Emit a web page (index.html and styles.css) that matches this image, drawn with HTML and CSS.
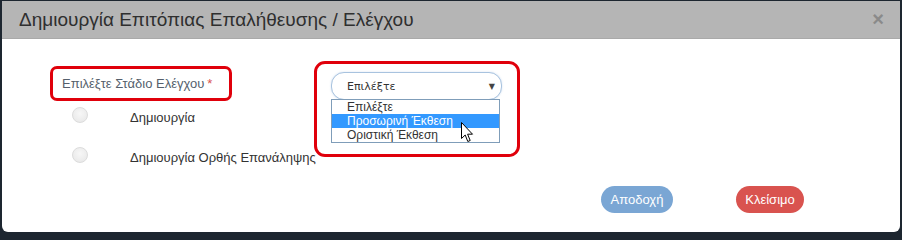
FILE: index.html
```html
<!DOCTYPE html>
<html lang="el">
<head>
<meta charset="utf-8">
<link rel="stylesheet" href="styles.css">
</head>
<body>
<div class="modal">
  <div class="modal-header">
    <h4 class="modal-title">Δημιουργία Επιτόπιας Επαλήθευσης / Ελέγχου</h4>
    <span class="close">×</span>
  </div>
  <div class="modal-body">
    <div class="left-col">
      <div class="label-box">Επιλέξτε Στάδιο Ελέγχου <span class="req">*</span></div>
      <div class="radio-list">
        <div class="radio-row"><span class="radio"></span><span class="radio-label">Δημιουργία</span></div>
        <div class="radio-row"><span class="radio"></span><span class="radio-label">Δημιουργία Ορθής Επανάληψης</span></div>
      </div>
    </div>
    <div class="select-box">
      <div class="select-wrap">
        <div class="select">
          <span>Επιλέξτε</span>
          <span class="arrow">▼</span>
        </div>
        <ul class="options">
          <li>Επιλέξτε</li>
          <li class="active">Προσωρινή Έκθεση</li>
          <li>Οριστική Έκθεση</li>
        </ul>
        <svg class="cursor" width="13" height="21" viewBox="0 0 13 21">
          <path d="M0.5 0.5 L0.5 16.5 L4.2 13 L6.8 19.5 L9.2 18.5 L6.6 12.2 L11.5 12.2 Z" fill="#fff" stroke="#000" stroke-width="1" stroke-linejoin="miter"/>
        </svg>
      </div>
    </div>
  </div>
  <div class="modal-footer">
    <button class="btn btn-accept">Αποδοχή</button>
    <button class="btn btn-close">Κλείσιμο</button>
  </div>
</div>
</body>
</html>
```

FILE: styles.css
```css
html, body {
  margin: 0;
  padding: 0;
}
body {
  background: #1d2630;
  width: 902px;
  height: 235px;
  overflow: hidden;
  font-family: "Liberation Sans", Arial, sans-serif;
}
.modal {
  margin: 1px 2px 0 2px;
  height: 231px;
  background: #fff;
  border-radius: 0 0 6px 6px;
  overflow: hidden;
}
.modal-header {
  height: 37px;
  background: #b5b5b5;
  display: flex;
  align-items: center;
  justify-content: space-between;
  padding: 0 16px 0 17px;
  border-bottom: 1px solid #a9a9a9;
}
.modal-title {
  margin: 0;
  font-size: 19px;
  font-weight: normal;
  color: #2f2f2f;
}
.close {
  font-size: 20px;
  font-weight: bold;
  color: #8a8a8a;
  line-height: 1;
  margin-top: -2px;
}
.modal-body {
  display: flex;
  align-items: flex-start;
  padding: 22px 0 0 48px;
  height: 118px;
}
.left-col {
  width: 182px;
}
.label-box {
  box-sizing: border-box;
  width: 182px;
  height: 35px;
  margin-top: 5px;
  border: 3px solid #e0000b;
  border-radius: 7px;
  padding-left: 9px;
  display: flex;
  align-items: center;
  font-size: 13px;
  color: #555f6c;
}
.req {
  color: #d9534f;
  margin-left: 3px;
}
.radio-list {
  display: flex;
  flex-direction: column;
  gap: 24px;
  margin-top: 6px;
  margin-left: 22px;
}
.radio-row {
  display: flex;
  align-items: center;
  height: 16px;
}
.radio {
  box-sizing: border-box;
  width: 16px;
  height: 16px;
  border-radius: 50%;
  border: 1px solid #dcdcdc;
  background: radial-gradient(circle at 50% 40%, #f7f7f7, #e6e6e6);
  flex: none;
}
.radio-label {
  margin-left: 42px;
  padding-top: 4px;
  font-size: 13px;
  color: #333;
  white-space: nowrap;
}
.select-box {
  box-sizing: border-box;
  margin-left: 82px;
  width: 206px;
  height: 96px;
  border: 3px solid #e0000b;
  border-radius: 11px;
  padding: 8px 0 0 14px;
}
.select-wrap {
  position: relative;
  width: 171px;
}
.select {
  box-sizing: border-box;
  width: 171px;
  height: 28px;
  border: 1px solid #a8c3df;
  border-radius: 13px;
  display: flex;
  align-items: center;
  justify-content: space-between;
  padding: 0 6px 0 15px;
  font-family: "DejaVu Sans", sans-serif;
  font-size: 11px;
  color: #333;
  background: #fff;
  box-shadow: 0 0 2px rgba(102, 150, 210, 0.3);
}
.arrow {
  font-size: 8px;
  color: #444;
}
.options {
  position: absolute;
  left: 0;
  top: 27px;
  box-sizing: border-box;
  width: 169px;
  margin: 0;
  padding: 0;
  list-style: none;
  border: 1px solid #7f9db9;
  background: #fff;
  font-family: "Liberation Sans", Arial, sans-serif;
  font-size: 12px;
  color: #333;
}
.options li {
  height: 14px;
  line-height: 14px;
  padding-left: 15px;
}
.options li.active {
  background: #3399ff;
  color: #fff;
}
.cursor {
  position: absolute;
  left: 130px;
  top: 50px;
}
.modal-footer {
  display: flex;
  justify-content: flex-end;
  gap: 63px;
  padding: 0 96px 0 0;
  margin-top: 7px;
}
.btn {
  border: none;
  height: 27px;
  border-radius: 14px;
  font-family: "Liberation Sans", Arial, sans-serif;
  font-size: 13px;
  color: #fff;
  padding: 0;
}
.btn-accept {
  width: 72px;
  background: #7aa6d4;
}
.btn-close {
  width: 68px;
  background: #d9534f;
}
```
